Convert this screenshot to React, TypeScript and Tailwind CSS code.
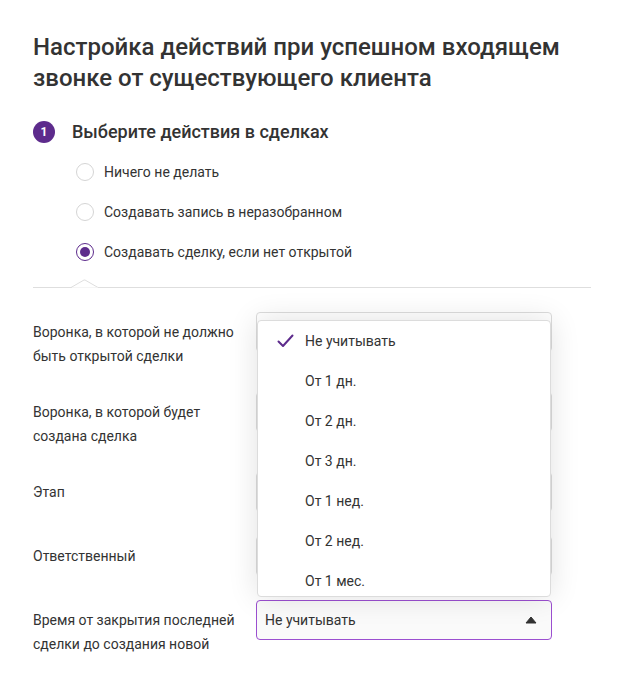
import React from 'react';

const actions = [
  { id: 'none', label: 'Ничего не делать' },
  { id: 'unsorted', label: 'Создавать запись в неразобранном' },
  { id: 'lead', label: 'Создавать сделку, если нет открытой' },
];

const timeOptions = ['Не учитывать', 'От 1 дн.', 'От 2 дн.', 'От 3 дн.', 'От 1 нед.', 'От 2 нед.', 'От 1 мес.'];

function Radio({ checked, label }: { checked: boolean; label: string }) {
  return (
    <label className="flex items-center h-10 gap-[10px] cursor-pointer">
      <span
        className={`w-[18px] h-[18px] rounded-full border flex items-center justify-center bg-white ${
          checked ? 'border-[#5d2b8c]' : 'border-[#d5d5d5]'
        }`}
      >
        {checked && <span className="w-[10px] h-[10px] rounded-full bg-[#5d2b8c]" />}
      </span>
      <span className="text-[14px] text-[#333]">{label}</span>
    </label>
  );
}

function FormRow({ label, children }: { label: React.ReactNode; children?: React.ReactNode }) {
  return (
    <div className="flex items-start">
      <div className="w-[223px] pt-2 pr-4 text-[14px] leading-6 text-[#333]">{label}</div>
      <div className="w-[296px] relative">{children}</div>
    </div>
  );
}

function PlainSelect() {
  return <div className="h-10 rounded border border-[#dcdcdc] bg-white" />;
}

export default function App() {
  return (
    <div className="min-h-screen bg-white px-[33px] pt-[32px] pb-8" style={{ fontFamily: 'Roboto, "Liberation Sans", sans-serif' }}>
      <h1 className="text-[24px] leading-[31px] font-medium text-[#333] max-w-[560px]">
        Настройка действий при успешном входящем звонке от существующего клиента
      </h1>

      {/* Шаг 1 */}
      <div className="flex items-center gap-[17px] mt-[26px]">
        <span className="w-[22px] h-[22px] rounded-full bg-[#5d2b8c] text-white text-[12px] font-bold flex items-center justify-center">
          1
        </span>
        <span className="text-[18px] leading-6 font-medium text-[#333]">Выберите действия в сделках</span>
      </div>

      <div className="pl-[43px] mt-[8px]">
        {actions.map(a => (
          <Radio key={a.id} checked={a.id === 'lead'} label={a.label} />
        ))}
      </div>

      {/* Divider with notch */}
      <div className="relative mt-[15px] h-px bg-[#dedede]">
        <svg className="absolute left-[38px] -top-[8px]" width="28" height="9" viewBox="0 0 28 9">
          <path d="M0 8.5 L13 1 L14 1 L27 8.5" fill="#fff" stroke="#dedede" strokeWidth="1" />
          <rect x="1" y="8.6" width="26" height="1" fill="#fff" />
        </svg>
      </div>

      <div className="mt-[24px] flex flex-col gap-6">
        <FormRow label={<>Воронка, в которой не должно<br />быть открытой сделки</>}>
          <PlainSelect />
        </FormRow>
        <FormRow label={<>Воронка, в которой будет<br />создана сделка</>}>
          <PlainSelect />
        </FormRow>
        <FormRow label="Этап">
          <PlainSelect />
        </FormRow>
        <FormRow label="Ответственный">
          <PlainSelect />
        </FormRow>
        <FormRow label={<>Время от закрытия последней<br />сделки до создания новой</>}>
          <div className="h-10 rounded border border-[#9b4fd0] bg-[#fafafa] flex items-center justify-between pl-2 pr-[14px]">
            <span className="text-[14px] text-[#333]">Не учитывать</span>
            <svg width="12" height="8" viewBox="0 0 12 8">
              <path d="M6 1 L11 7 L1 7 Z" fill="#333" stroke="#333" strokeWidth="1" strokeLinejoin="round" />
            </svg>
          </div>

          {/* Открытый список */}
          <div className="absolute left-px right-px bottom-[43px] h-[277px] overflow-hidden rounded border border-[#dcdcdc] bg-white shadow-[0_0_30px_rgba(0,0,0,0.12)] z-10">
            {timeOptions.map((o, i) => (
              <div key={o} className="h-10 flex items-center pl-[19px] text-[14px] text-[#333]">
                <span className="w-[28px] flex items-center">
                  {i === 0 && (
                    <svg width="17" height="14" viewBox="0 0 17 14">
                      <path d="M1.5 7.5 L6 12 L15.5 1.5" fill="none" stroke="#5d2b8c" strokeWidth="2" strokeLinecap="round" strokeLinejoin="round" />
                    </svg>
                  )}
                </span>
                {o}
              </div>
            ))}
          </div>
        </FormRow>
      </div>
    </div>
  );
}
